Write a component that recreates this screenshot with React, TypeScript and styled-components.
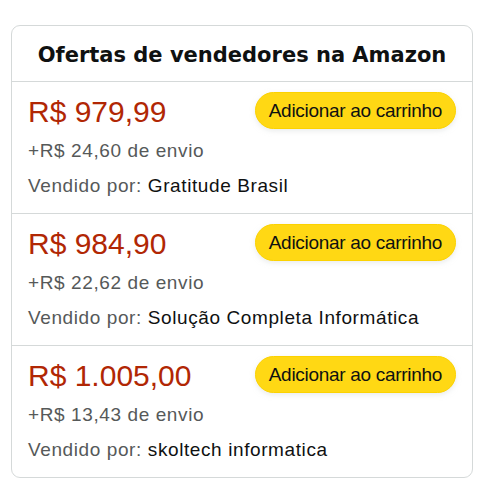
import React from "react";
import styled, { createGlobalStyle } from "styled-components";

interface Offer {
  price: string;
  shipping: string;
  seller: string;
}

const offers: Offer[] = [
  { price: "R$ 979,99", shipping: "+R$ 24,60 de envio", seller: "Gratitude Brasil" },
  { price: "R$ 984,90", shipping: "+R$ 22,62 de envio", seller: "Solução Completa Informática" },
  { price: "R$ 1.005,00", shipping: "+R$ 13,43 de envio", seller: "skoltech informatica" },
];

function OfferRow({ price, shipping, seller }: Offer) {
  return (
    <Row>
      <TopLine>
        <Price>{price}</Price>
        <CartButton type="button">Adicionar ao carrinho</CartButton>
      </TopLine>
      <Shipping>{shipping}</Shipping>
      <Seller>
        Vendido por: <SellerName>{seller}</SellerName>
      </Seller>
    </Row>
  );
}

function App() {
  return (
    <>
      <GlobalStyle />
      <Card>
        <Header>Ofertas de vendedores na Amazon</Header>
        {offers.map((o) => (
          <OfferRow key={o.seller} {...o} />
        ))}
      </Card>
    </>
  );
}

export default App;

const GlobalStyle = createGlobalStyle`
  body {
    margin: 0;
    background: #ffffff;
    font-family: "Liberation Sans", Arial, sans-serif;
  }
`;

const Card = styled.div`
  margin: 25px 0 0 11px;
  width: 462px;
  box-sizing: border-box;
  border: 1px solid #d5d9d9;
  border-radius: 9px;
  overflow: hidden;
`;

const Header = styled.h2`
  margin: 0;
  padding: 17px 16px 14px;
  line-height: 24px;
  font-family: "DejaVu Sans", Verdana, sans-serif;
  font-size: 21px;
  font-weight: 700;
  color: #0f1111;
  text-align: center;
  border-bottom: 1px solid #d5d9d9;
`;

const Row = styled.div`
  display: flex;
  flex-direction: column;
  padding: 12px 16px 14px 16px;
  & + & {
    border-top: 1px solid #d5d9d9;
  }
`;

const TopLine = styled.div`
  display: flex;
  justify-content: space-between;
  align-items: flex-start;
`;

const Price = styled.span`
  font-size: 30px;
  line-height: 36px;
  color: #b12704;
`;

const CartButton = styled.button`
  margin-top: -2px;
  height: 37px;
  padding: 0 13px;
  border: 1px solid #fcd200;
  border-radius: 19px;
  background: #ffd814;
  box-shadow: 0 2px 5px 0 rgba(213, 217, 217, 0.5);
  font-family: "Liberation Sans", Arial, sans-serif;
  font-size: 19px;
  letter-spacing: -0.3px;
  color: #0f1111;
`;

const Shipping = styled.div`
  margin-top: 8px;
  font-size: 19px;
  line-height: 26px;
  letter-spacing: 0.6px;
  color: #565959;
`;

const Seller = styled.div`
  margin-top: 9px;
  font-size: 19px;
  line-height: 26px;
  letter-spacing: 0.6px;
  color: #565959;
`;

const SellerName = styled.span`
  color: #0f1111;
`;
